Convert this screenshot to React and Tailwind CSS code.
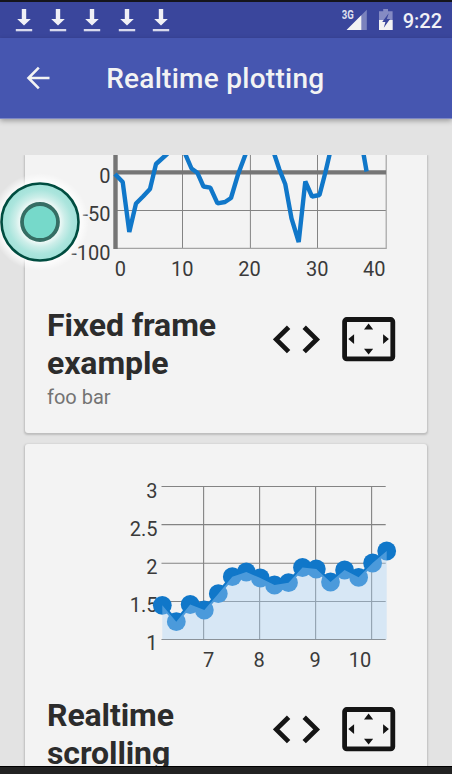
import React from 'react';

const fixedSegments = [
  '115,174 122.7,182 129.3,232 136,203.5 143,196.5 150,189 156,164 167,154 178,144',
  '181,144 185.5,154.6 191.5,168.5 197.3,172.7 203.5,186.5 210.3,187.7 217.5,203.3 225,202 231,198 238,174.5 249,145',
  '271,145 274.5,154.7 279.3,169.3 285.3,184.3 291.5,218.3 298.7,242 305.3,181.5 312,196.5 319.5,195 325.5,172 332,144',
  '361.5,144 363.7,155 366.6,171.5',
];

const scrollingPoints = [
  [162.3, 605.3], [176.3, 621.7], [190.2, 604.5], [204.3, 610], [218.3, 593.7], [232.3, 576.7],
  [246.3, 572], [260.3, 578], [274.5, 585], [288.5, 582.7], [302.5, 567.5], [316.3, 569],
  [330.5, 582], [344.6, 570], [358.6, 577.3], [372.6, 563], [386.7, 551],
];

const Label = ({ x, y, anchor = 'middle', children }) => (
  <text x={x} y={y} textAnchor={anchor} className="fill-[#3a3a3a] text-[20px]">
    {children}
  </text>
);

const FixedFrameChart = () => (
  <svg viewBox="25 155 402 146" className="block h-[146px] w-full">
    <g stroke="#838383" strokeWidth="1">
      {[182.5, 250.4, 317.5].map((x) => (
        <line key={x} x1={x} x2={x} y1="155" y2="248.5" />
      ))}
      <line x1="117" x2="386" y1="210.5" y2="210.5" />
      <path d="M117 248.4H386.2V155" fill="none" stroke="#a3a3a3" strokeWidth="1.2" />
    </g>
    <path d="M115.5 155V249M113.5 172.4H386" stroke="#757575" strokeWidth="4.4" />
    {fixedSegments.map((points) => (
      <polyline key={points} points={points} fill="none" stroke="#1077c9" strokeWidth="4.4" strokeLinejoin="bevel" />
    ))}
    <Label x="110.5" y="183.3" anchor="end">0</Label>
    <Label x="110.5" y="221.3" anchor="end">-50</Label>
    <Label x="110.5" y="259.6" anchor="end">-100</Label>
    <Label x="120.3" y="275.7">0</Label>
    <Label x="182.3" y="275.7">10</Label>
    <Label x="249.6" y="275.7">20</Label>
    <Label x="317.2" y="275.7">30</Label>
    <Label x="374.2" y="275.7">40</Label>
  </svg>
);

const ScrollingChart = () => {
  const line = scrollingPoints.map((p) => p.join(',')).join(' ');

  return (
    <svg viewBox="25 444 402 247" className="block h-[247px] w-full">
      <g stroke="#838383" strokeWidth="1.1">
        {[486.5, 524.6, 563.3, 601.5, 639.5].map((y) => (
          <line key={y} x1="161.5" x2="385.7" y1={y} y2={y} />
        ))}
        {[203.6, 259.6, 315.6, 371.6].map((x) => (
          <line key={x} x1={x} x2={x} y1="486.5" y2="639.4" />
        ))}
      </g>
      <Label x="157.5" y="497.8" anchor="end">3</Label>
      <Label x="157.5" y="535.8" anchor="end">2.5</Label>
      <Label x="157.5" y="574" anchor="end">2</Label>
      <Label x="157.5" y="612.2" anchor="end">1.5</Label>
      <Label x="157.5" y="650.3" anchor="end">1</Label>
      <polyline points={line} fill="none" stroke="#1077c9" strokeWidth="4" />
      {scrollingPoints.map(([x, y]) => (
        <circle key={x} cx={x} cy={y} r="9.4" fill="#1077c9" />
      ))}
      <polygon points={`${line} 386.7,639.4 162.3,639.4`} fill="#a9d2f8" fillOpacity="0.39" />
      <Label x="208.5" y="666.7">7</Label>
      <Label x="259.2" y="666.7">8</Label>
      <Label x="315" y="666.7">9</Label>
      <Label x="360" y="666.7">10</Label>
    </svg>
  );
};

const CodeIcon = () => (
  <svg viewBox="0 0 48 30" className="h-[30px] w-12" fill="none" stroke="#141414" strokeWidth="4.8">
    <path d="M15.6 2.2 3.2 14.4l12.4 12.2M31.2 2.2 43.6 14.4 31.2 26.6" />
  </svg>
);

const FrameIcon = () => (
  <svg viewBox="0 0 54 45" className="h-[45px] w-[54px]">
    <rect x="2.6" y="2.5" width="48.2" height="39.4" rx="2.2" fill="none" stroke="#141414" strokeWidth="4.8" />
    <path d="M26.6 6.5l4.6 6H22zM26.6 37.4l4.6-5.6H22zM6.3 22.1l5.8-4.8v9.6zM46.9 22.1l-5.8-4.8v9.6z" fill="#141414" />
  </svg>
);

const PlotCard = ({ title, subtitle, children, className }) => (
  <div className={`bg-[#f3f3f3] shadow-[0_1px_2px_1px_rgba(0,0,0,0.17)] ${className}`}>
    {children}
    <div className="flex items-start pt-1.5 pr-[31px] pl-[22px]">
      <div className="w-[200px] shrink-0">
        <h2 className="text-[32px] leading-[37.5px] font-bold tracking-[-0.1px] text-[#2c2c2c]">{title}</h2>
        {subtitle && <p className="mt-[3px] text-[20px] leading-6 text-[#737373]">{subtitle}</p>}
      </div>
      <div className="ml-auto flex items-center gap-[21px] pt-[10px]">
        <CodeIcon />
        <FrameIcon />
      </div>
    </div>
  </div>
);

const DownloadIcon = () => (
  <svg viewBox="0 0 18 24" className="h-6 w-[18px]" fill="#f1f1f6">
    <path d="M6.8 1h4.4v10h4.6L9 17.6 2.2 11h4.6z" />
    <path d="M.8 21h16.4v2.3H.8z" fill="#d8d9ec" />
  </svg>
);

const StatusBar = () => (
  <div className="flex h-9 shrink-0 items-start bg-[#3a469c] pl-[15px] text-[#f1f1f6]">
    <div className="flex gap-[16.2px] pt-1.5">
      {[0, 1, 2, 3, 4].map((i) => (
        <DownloadIcon key={i} />
      ))}
    </div>
    <svg viewBox="0 0 56 24" className="mt-1.5 ml-auto h-6 w-14">
      <path d="M4.6 22 24.8 1.8V22z" fill="#7b83bd" />
      <path d="M4.6 22 19.3 7.2V22z" fill="#f3f3f3" />
      <text x="-0.2" y="11" className="fill-[#dfe0ef] text-[12px] font-bold" textLength="12" lengthAdjust="spacingAndGlyphs">3G</text>
      <path d="M37 3.2h4.2V1h4.8v2.2h4.6V22H37z" fill="#858bc3" />
      <path d="M37 12h13.6v10H37z" fill="#f3f3f3" />
      <path d="M46.7 5.2 40.2 14h3.2l-1.6 5.8 6.3-8.8h-3.2z" fill="#3a469c" />
    </svg>
    <span className="mt-[7px] mr-[10px] ml-[5px] text-[20px] leading-6 font-medium">9:22</span>
  </div>
);

const AppBar = () => (
  <header className="z-10 flex h-[81px] shrink-0 items-center border-b border-[#7e88c4] bg-[#4656b0] shadow-[0_2px_5px_rgba(0,0,0,0.3)]">
    <svg viewBox="0 0 24 24" className="ml-[26px] size-6" fill="none" stroke="#f3f3f3" strokeWidth="2.6">
      <path d="M12.8 1.7 2.5 12l10.3 10.3M2.5 12h21" />
    </svg>
    <h1 className="mt-0.5 ml-[56.2px] text-[28px] leading-8 font-medium tracking-[0.27px] text-[#f3f3f3]">Realtime plotting</h1>
  </header>
);

const TouchPointer = () => (
  <svg viewBox="-50 -50 100 100" className="pointer-events-none absolute top-[172px] left-[-10px] z-20 size-[100px]">
    <defs>
      <radialGradient id="halo" gradientUnits="userSpaceOnUse" cx="0" cy="0" r="49">
        <stop offset="0.79" stopColor="#fff" stopOpacity="0.95" />
        <stop offset="1" stopColor="#fff" stopOpacity="0" />
      </radialGradient>
      <radialGradient id="ring" gradientUnits="userSpaceOnUse" cx="0" cy="0" r="39">
        <stop offset="0.5" stopColor="#f1faf8" />
        <stop offset="0.64" stopColor="#cceee9" />
        <stop offset="0.82" stopColor="#abe5dd" />
        <stop offset="1" stopColor="#a0e1d8" />
      </radialGradient>
    </defs>
    <circle r="49" fill="url(#halo)" />
    <circle r="38.5" fill="url(#ring)" stroke="#004d40" strokeWidth="2.6" />
    <circle r="18" fill="#76d9ca" stroke="#356e64" strokeWidth="3.8" />
  </svg>
);

export default function App() {
  return (
    <div className="relative flex h-[774px] w-[452px] flex-col overflow-hidden bg-[#e3e3e3] font-['Roboto',sans-serif]">
      <div className="h-0.5 shrink-0 bg-[#15151b]" />
      <StatusBar />
      <AppBar />
      <main className="min-h-0 flex-1 px-[22px] pt-9">
        <div className="flex h-full flex-col gap-[11px] overflow-hidden px-[3px]">
          <PlotCard title="Fixed frame example" subtitle="foo bar" className="h-[278px] shrink-0 rounded-b-[3px]">
            <FixedFrameChart />
          </PlotCard>
          <PlotCard title="Realtime scrolling" className="h-[340px] shrink-0 rounded-t-[3px]">
            <ScrollingChart />
          </PlotCard>
        </div>
      </main>
      <div className="z-10 h-2 shrink-0 border-t border-black bg-[#222222]" />
      <TouchPointer />
    </div>
  );
}
